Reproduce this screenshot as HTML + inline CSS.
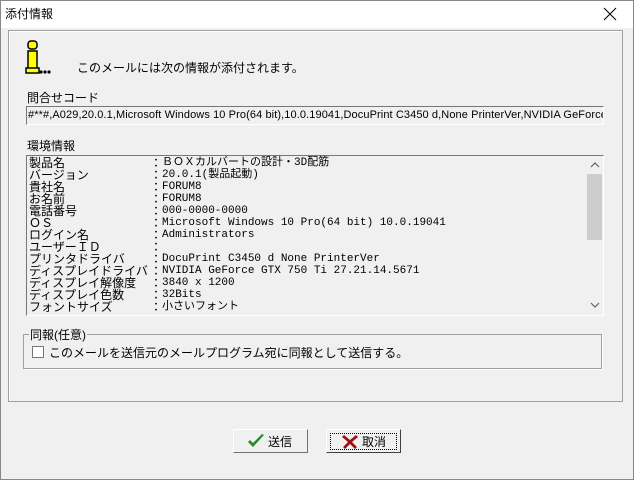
<!DOCTYPE html>
<html><head><meta charset="utf-8"><style>
*{margin:0;padding:0;box-sizing:border-box}
body{width:634px;height:480px;background:#f0f0f0;position:relative;overflow:hidden;font-family:"Liberation Sans","Noto Sans CJK JP",sans-serif;font-size:12px;color:#000}
.a{position:absolute;white-space:nowrap}
#win{position:absolute;left:0;top:0;width:634px;height:480px;border:1px solid #888}
#title{position:absolute;left:1px;top:1px;width:632px;height:27px;background:#fff}
.mono{font-family:"Liberation Mono","Noto Sans CJK JP",monospace;font-size:11px}
.lb{font-family:"Noto Sans CJK JP",sans-serif;font-size:12px;line-height:12px;letter-spacing:0}
</style></head><body>
<div id="win"></div>
<div id="title"></div>
<div class="a" style="left:5px;top:5px;font-size:12px">添付情報</div>
<svg class="a" style="left:603px;top:7px" width="14" height="14"><path d="M1 1L13 13M13 1L1 13" stroke="#000" stroke-width="1.1"/></svg>
<div class="a" style="left:8px;top:30px;width:615px;height:372px;border:1px solid #a0a0a0;box-shadow:inset 1px 1px 0 #fff"></div>
<svg class="a" style="left:24px;top:40px" width="30" height="36">
<rect x="4" y="1" width="9" height="8" rx="3" fill="#ff0" stroke="#000" stroke-width="1.5"/>
<rect x="4" y="11" width="9" height="21" fill="#ff0" stroke="#000" stroke-width="1.5"/>
<rect x="2" y="28" width="13" height="5" fill="#ff0" stroke="#000" stroke-width="1.5"/>
<circle cx="17" cy="32" r="1.6" fill="#000"/><circle cx="21" cy="32" r="1.6" fill="#000"/><circle cx="25" cy="32" r="1.6" fill="#000"/>
</svg>
<div class="a" style="left:77px;top:59px">このメールには次の情報が添付されます。</div>
<div class="a" style="left:27px;top:89px">問合せコード</div>
<div class="a" style="left:26px;top:106px;width:578px;height:19px;border-top:1px solid #777;border-left:1px solid #777;border-bottom:1px solid #fff;border-right:1px solid #fff;overflow:hidden;font-size:11px;letter-spacing:0.1px;padding:2px 0 0 1px">#**#,A029,20.0.1,Microsoft Windows 10 Pro(64 bit),10.0.19041,DocuPrint C3450 d,None PrinterVer,NVIDIA GeForce GTX</div>
<div class="a" style="left:27px;top:137px">環境情報</div>
<div class="a" style="left:26px;top:155px;width:578px;height:161px;border-top:1px solid #777;border-left:1px solid #777;border-bottom:1px solid #fff;border-right:1px solid #fff;overflow:hidden">
<div class="a" style="left:560px;top:0;width:16px;height:158px;background:#f0f0f0"></div>
<div class="a" style="left:560px;top:18px;width:15px;height:66px;background:#cdcdcd"></div>
<svg class="a" style="left:563px;top:6px" width="10" height="6"><path d="M1 5L5 1L9 5" stroke="#606060" fill="none" stroke-width="1.2"/></svg>
<svg class="a" style="left:563px;top:146px" width="10" height="6"><path d="M1 1L5 5L9 1" stroke="#606060" fill="none" stroke-width="1.2"/></svg>
</div>
<div class="a lb" style="left:29px;top:157px">製品名<br>バージョン<br>貴社名<br>お名前<br>電話番号<br>ＯＳ<br>ログイン名<br>ユーザーＩＤ<br>プリンタドライバ<br>ディスプレイドライバ<br>ディスプレイ解像度<br>ディスプレイ色数<br>フォントサイズ</div>
<div class="a lb" style="left:150px;top:157px">：<br>：<br>：<br>：<br>：<br>：<br>：<br>：<br>：<br>：<br>：<br>：<br>：</div>
<div class="a mono" style="left:162px;top:157px;line-height:12px">ＢＯＸカルバートの設計・3D配筋<br>20.0.1(製品起動)<br>FORUM8<br>FORUM8<br>000-0000-0000<br>Microsoft Windows 10 Pro(64 bit) 10.0.19041<br>Administrators<br>&nbsp;<br>DocuPrint C3450 d None PrinterVer<br>NVIDIA GeForce GTX 750 Ti 27.21.14.5671<br>3840 x 1200<br>32Bits<br>小さいフォント</div>
<div class="a" style="left:23px;top:334px;width:579px;height:35px;border:1px solid #a0a0a0;box-shadow:1px 1px 0 #fff"></div>
<div class="a" style="left:29px;top:326px;background:#f0f0f0;padding:0 1px">同報(任意)</div>
<div class="a" style="left:32px;top:346px;width:12px;height:12px;border:1px solid #777;background:#fff"></div>
<div class="a" style="left:49px;top:344px">このメールを送信元のメールプログラム宛に同報として送信する。</div>
<div class="a" style="left:233px;top:429px;width:75px;height:24px;border:1px solid;border-color:#fff #707070 #707070 #fff;background:#f0f0f0"></div>
<svg class="a" style="left:247px;top:433px" width="18" height="16"><path d="M1 9L6 14L17 2L15 1L6 10L3 7Z" fill="#2a8a2a"/></svg>
<div class="a" style="left:268px;top:433px">送信</div>
<div class="a" style="left:326px;top:429px;width:75px;height:24px;border:1px solid;border-color:#fff #404040 #404040 #fff;background:#f0f0f0"></div>
<div class="a" style="left:330px;top:433px;width:67px;height:17px;border:1px dotted #000"></div>
<svg class="a" style="left:342px;top:434px" width="16" height="15"><path d="M2 1L8 6L14 1L16 3L10 8L15 13L13 15L8 10L3 15L1 13L6 8L0 3Z" fill="#a01010"/></svg>
<div class="a" style="left:362px;top:433px">取消</div>
</body></html>
